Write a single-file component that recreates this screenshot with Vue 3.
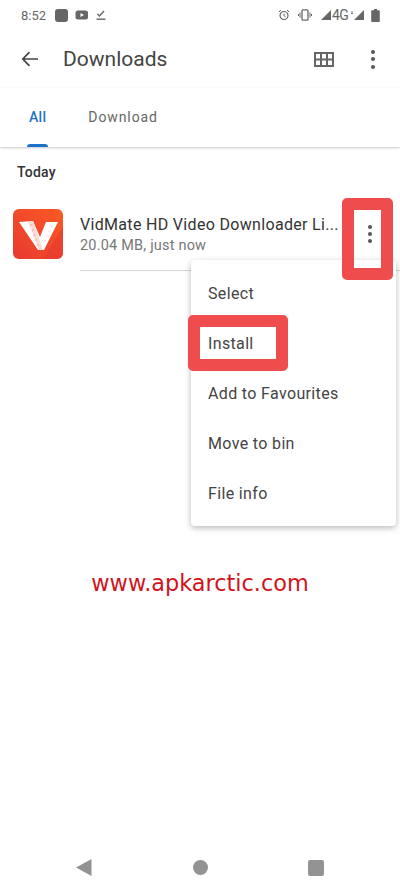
<script setup>
const menu = ['Select', 'Install', 'Add to Favourites', 'Move to bin', 'File info']
</script>

<template>
  <div class="screen">
    <div class="status">
      <span class="time">8:52</span>
      <span class="notif-square"></span>
      <svg class="ic" width="14" height="12" viewBox="0 0 14 12"><rect x="0.5" y="1.5" width="12.5" height="9" rx="2.5" fill="#666"/><path d="M5.5 4l3.5 2-3.5 2z" fill="#fff"/></svg>
      <svg class="ic" width="10" height="12" viewBox="0 0 10 12"><path d="M1.5 5l2 2 4.5-5" fill="none" stroke="#666" stroke-width="1.4"/><rect x="0.5" y="9.5" width="9" height="1.4" fill="#666"/></svg>
      <span class="spacer"></span>
      <svg width="12" height="12" viewBox="0 0 12 12" class="s1"><circle cx="6" cy="6.5" r="4" fill="none" stroke="#666" stroke-width="1.2"/><path d="M6 4.5v2.2l1.5 1M1 2.8l2-1.6M11 2.8L9 1.2" fill="none" stroke="#666" stroke-width="1"/></svg>
      <svg width="14" height="12" viewBox="0 0 14 12" class="s2"><rect x="4" y="0.8" width="6" height="10.4" rx="1" fill="none" stroke="#666" stroke-width="1.3"/><path d="M2 3.5v5M0.5 5v2M12 3.5v5M13.5 5v2" stroke="#666" stroke-width="1"/></svg>
      <svg width="10" height="10" viewBox="0 0 10 10" class="s3"><path d="M10 0v10H0z" fill="#666"/></svg>
      <span class="net">4G</span>
      <svg width="13" height="10" viewBox="0 0 13 10" class="s4"><path d="M13 0v10H3z" fill="#666"/><path d="M1 1v3M0 3l1 1 1-1" fill="none" stroke="#666" stroke-width=".8"/></svg>
      <svg width="9" height="13" viewBox="0 0 9 13" class="s5"><path d="M3 0h3v1.2h2a.8.8 0 0 1 .8.8v10.2a.8.8 0 0 1-.8.8H1a.8.8 0 0 1-.8-.8V2A.8.8 0 0 1 1 1.2h2z" fill="#666"/></svg>
    </div>

    <header class="bar">
      <svg class="back" width="18" height="16" viewBox="0 0 18 16"><path d="M17 8H2M8.5 1.2L1.8 8l6.7 6.8" fill="none" stroke="#444" stroke-width="1.7"/></svg>
      <span class="title">Downloads</span>
      <span class="spacer"></span>
      <svg class="grid" width="20" height="15" viewBox="0 0 20 15"><path d="M1 1h18v13H1zM1 7.5h18M7 1v13M13 1v13" fill="none" stroke="#666" stroke-width="2"/></svg>
      <span class="dots big"><i></i><i></i><i></i></span>
    </header>

    <nav class="tabs">
      <span class="tab active">All</span>
      <span class="tab">Download</span>
    </nav>

    <section class="list">
      <h2 class="day">Today</h2>
      <div class="row">
        <svg class="app" width="50" height="50" viewBox="0 0 50 50">
          <defs>
            <linearGradient id="vm" x1="0" y1="1" x2="1" y2="0">
              <stop offset="0" stop-color="#e8392f"/>
              <stop offset="1" stop-color="#fb5a25"/>
            </linearGradient>
          </defs>
          <rect width="50" height="50" rx="6" fill="url(#vm)"/>
          <path d="M30 50L50 18v26a6 6 0 0 1-6 6z" fill="#e23a30" opacity=".6"/>
          <path d="M6 13l14-1 7 16 6-15h12L31 41h-6z" fill="#fff"/>
          <path d="M15 12.4l5-.4 10 29h-4z" fill="#fbdcd4"/>
          <path d="M17.5 16h1.6M19 21h1.6M20.8 26h1.6M22.5 31h1.6M24.2 36h1.6" stroke="#f2917c" stroke-width=".9"/>
          <path d="M37.5 17h2M35.5 22h2M33.5 27h2M31.5 32h2" stroke="#f9c6b9" stroke-width=".9"/>
        </svg>
        <div class="info">
          <div class="name">VidMate HD Video Downloader Li...</div>
          <div class="meta">20.04 MB, just now</div>
        </div>
        <span class="dots"><i></i><i></i><i></i></span>
      </div>
      <div class="rule"></div>
      <div class="callout more"></div>
      <div class="menu">
        <div v-for="m in menu" :key="m" class="item">{{ m }}</div>
      </div>
      <div class="callout install"></div>
    </section>

    <div class="mark">www.apkarctic.com</div>

    <footer class="nav">
      <svg width="16" height="17" viewBox="0 0 16 17"><path d="M15.5 0v17L0 8.5z" fill="#939393"/></svg>
      <span class="circle"></span>
      <span class="square"></span>
    </footer>
  </div>
</template>

<style>
html, body { margin: 0; background: #fff; }
</style>

<style scoped>
.screen {
  width: 400px;
  height: 889px;
  background: #fff;
  display: flex;
  flex-direction: column;
  font-family: Roboto, "Liberation Sans", sans-serif;
  overflow: hidden;
  position: relative;
}
.status {
  height: 30px;
  display: flex;
  align-items: center;
  padding: 0 20px 0 21px;
  color: #666;
}
.time { font-size: 13px; margin-right: 11px; width: 23px; }
.notif-square { width: 13px; height: 13px; border-radius: 3px; background: #666; margin-right: 7px; }
.ic { margin-right: 7px; }
.spacer { flex: 1; }
.s1 { margin-right: 8px; }
.s2 { margin-right: 9px; }
.net { font-size: 14px; width: 15px; margin: 0 4px 0 1px; letter-spacing: -0.5px; }
.s4 { margin-right: 7px; }
.bar {
  height: 58px;
  display: flex;
  align-items: center;
  padding-left: 21px;
  padding-right: 25px;
}
.title { font-size: 21px; color: #444; margin-left: 24px; }
.grid { margin-right: 37px; }
.dots { display: flex; flex-direction: column; gap: 3px; align-items: center; }
.dots i { width: 4px; height: 4px; border-radius: 50%; background: #555; display: block; }
.dots.big { gap: 3.5px; }
.tabs {
  height: 59px;
  display: flex;
  align-items: center;
  padding-left: 29px;
  gap: 42px;
  box-shadow: 0 1px 2px rgba(0,0,0,.22);
  position: relative;
}
.tab { font-size: 14px; color: #666; letter-spacing: .9px; position: relative; height: 59px; line-height: 59px; }
.tab.active { color: #1a73c8; font-weight: 500; letter-spacing: .3px; }
.tab.active::after {
  content: "";
  position: absolute;
  left: -2px;
  right: -2px;
  bottom: 0;
  height: 3px;
  border-radius: 3px 3px 0 0;
  background: #1a73c8;
}
.list { position: relative; flex: none; height: 400px; }
.day {
  margin: 0;
  font-size: 14px;
  font-weight: 500;
  color: #333;
  padding: 17px 0 0 17px;
  line-height: 17px;
  letter-spacing: .2px;
}
.row {
  display: flex;
  align-items: center;
  margin-top: 28px;
  padding-left: 13px;
  height: 50px;
}
.app { flex: none; }
.info { margin-left: 17px; width: 262px; margin-top: 1px; }
.name { font-size: 16px; color: #333; white-space: nowrap; line-height: 22px; letter-spacing: .32px; }
.meta { font-size: 14.5px; color: #777; line-height: 20px; letter-spacing: .2px; }
.dots:not(.big) { margin-left: 26px; }
.rule { height: 1px; background: #d6d6d6; margin: 11px 0 0 80px; }
.menu {
  position: absolute;
  left: 191px;
  top: 113px;
  width: 205px;
  height: 266px;
  padding: 9px 0 7px;
  box-sizing: border-box;
  background: #fff;
  border-radius: 4px;
  box-shadow: 0 2px 6px rgba(0,0,0,.28);
}
.item { height: 50px; line-height: 50px; padding-left: 17px; font-size: 16px; color: #444; letter-spacing: .35px; }
.callout {
  position: absolute;
  box-sizing: border-box;
  border: 12px solid #ef4d4d;
  border-radius: 5px;
  z-index: 2;
}
.more { left: 342px; top: 51px; width: 51px; height: 82px; }
.install { left: 188px; top: 168px; width: 100px; height: 56px; }
.mark {
  position: absolute;
  left: 0;
  right: 0;
  top: 570px;
  text-align: center;
  font-family: "DejaVu Sans", sans-serif;
  font-size: 22.4px;
  color: #d0141c;
}
.nav {
  position: absolute;
  left: 76px;
  right: 76px;
  bottom: 13px;
  display: flex;
  align-items: center;
  justify-content: space-between;
}
.circle { width: 15px; height: 15px; border-radius: 50%; background: #939393; }
.square { width: 16px; height: 16px; border-radius: 2px; background: #939393; }
</style>
